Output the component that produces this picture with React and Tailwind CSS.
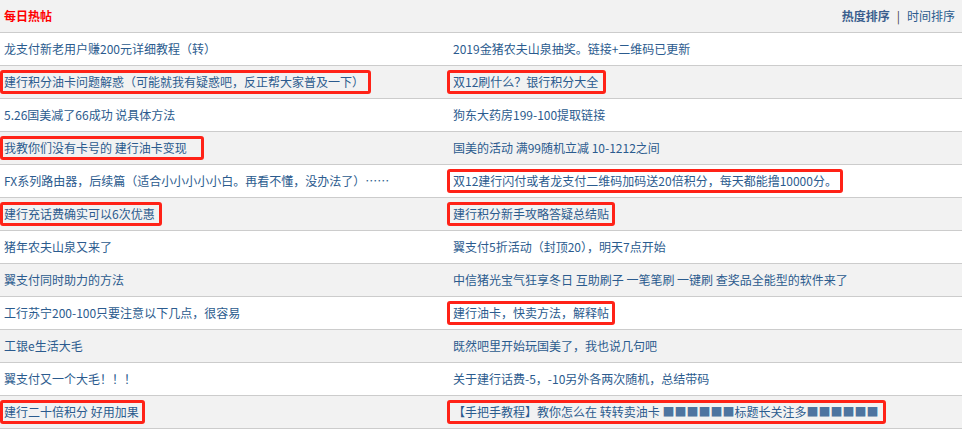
import React from 'react';

const rows = [
  { left: '龙支付新老用户赚200元详细教程（转）', right: '2019金猪农夫山泉抽奖。链接+二维码已更新' },
  { left: '建行积分油卡问题解惑（可能就我有疑惑吧，反正帮大家普及一下）', leftBox: 4, right: '双12刷什么？银行积分大全', rightBox: 5 },
  { left: '5.26国美减了66成功 说具体方法', right: '狗东大药房199-100提取链接' },
  { left: '我教你们没有卡号的 建行油卡变现', leftBox: 14, right: '国美的活动 满99随机立减 10-1212之间' },
  { left: 'FX系列路由器，后续篇（适合小小小小小白。再看不懂，没办法了）……', right: '双12建行闪付或者龙支付二维码加码送20倍积分，每天都能撸10000分。', rightBox: 3 },
  { left: '建行充话费确实可以6次优惠', leftBox: 4, right: '建行积分新手攻略答疑总结贴', rightBox: 3 },
  { left: '猪年农夫山泉又来了', right: '翼支付5折活动（封顶20），明天7点开始' },
  { left: '翼支付同时助力的方法', right: '中信猪光宝气狂享冬日 互助刷子 一笔笔刷 一键刷 查奖品全能型的软件来了' },
  { left: '工行苏宁200-100只要注意以下几点，很容易', right: '建行油卡，快卖方法，解释帖', rightBox: 3 },
  { left: '工银e生活大毛', right: '既然吧里开始玩国美了，我也说几句吧' },
  { left: '翼支付又一个大毛！！！', right: '关于建行话费-5，-10另外各两次随机，总结带码' },
  { left: '建行二十倍积分 好用加果', leftBox: 3, right: 'masked', rightBox: 5 },
];

// masked title in the last row: blocks stand in for hidden characters
function Masked() {
  return (
    <>
      【手把手教程】教你怎么在 转转卖油卡 <span className="text-[#4d74a0]">■■■■■■</span>标题长关注多<span className="text-[#4d74a0]">■■■■■■</span>
    </>
  );
}

function Cell({ text, box, side }) {
  const content = text === 'masked' ? <Masked /> : text;
  if (box === undefined) {
    return <span className="whitespace-nowrap">{content}</span>;
  }
  return (
    <span
      className={
        side === 'left'
          ? 'inline-block whitespace-nowrap -ml-[4px] pl-[1px] border-[3px] border-[#ff2217] rounded-[3px] leading-[18px]'
          : 'inline-block whitespace-nowrap -ml-[6px] pl-[3px] border-[3px] border-[#ff2217] rounded-[3px] leading-[18px]'
      }
      style={{ paddingRight: box }}
    >
      {content}
    </span>
  );
}

export default function App() {
  return (
    <div
      className="w-[962px] h-[429px] overflow-hidden bg-white text-[12px] text-[#2b5b8e]"
      style={{ fontFamily: '"Noto Sans CJK SC", "Liberation Sans", sans-serif' }}
    >
      {/* Header */}
      <div className="flex items-center justify-between h-[33px] bg-[#f2f2f2] border-b border-[#cccccc] pl-1 pr-[7px]">
        <span className="text-[12px] font-bold text-[#ff0000]">每日热帖</span>
        <div className="flex items-center">
          <span className="font-bold text-[#3b5f8e]">热度排序</span>
          <span className="mx-[7px] text-[#444]">|</span>
          <span>时间排序</span>
        </div>
      </div>

      {/* Rows */}
      {rows.map((row, i) => (
        <div
          key={i}
          className={
            i % 2 === 0
              ? 'grid grid-cols-[448px_1fr] items-center h-[33px] bg-white border-b border-[#cccccc]'
              : 'grid grid-cols-[448px_1fr] items-center h-[33px] bg-[#f2f2f2] border-b border-[#cccccc]'
          }
        >
          <div className="pl-1">
            <Cell text={row.left} box={row.leftBox} side="left" />
          </div>
          <div className="pl-[5px]">
            <Cell text={row.right} box={row.rightBox} side="right" />
          </div>
        </div>
      ))}
    </div>
  );
}
